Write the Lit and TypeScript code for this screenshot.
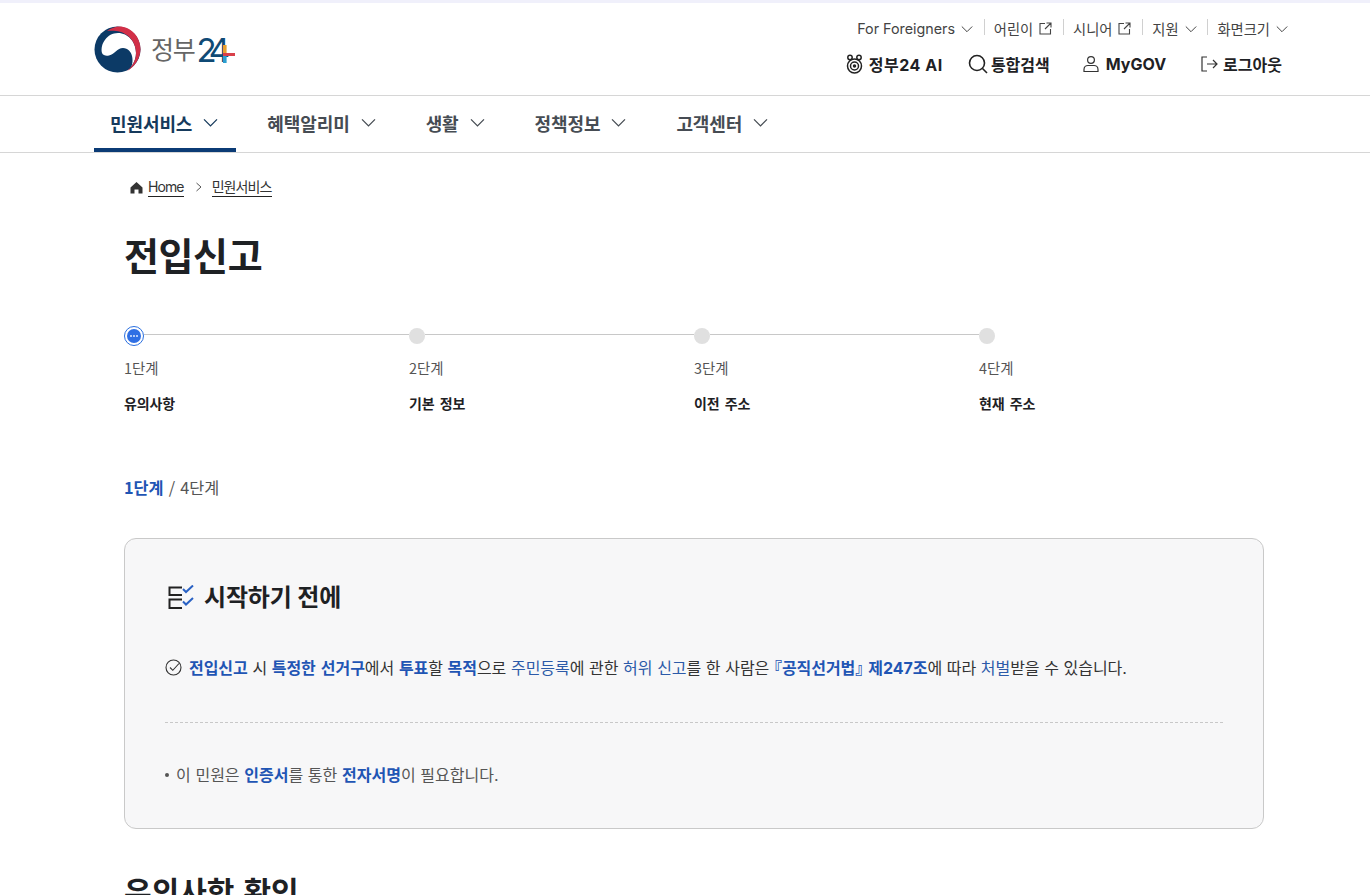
import { LitElement, html, css } from "lit";
import { customElement } from "lit/decorators.js";

const chev = (s = 12) => html`<svg class="chev" width=${s} height=${s} viewBox="0 0 12 12" fill="none" stroke="currentColor" stroke-width="1"><path d="M.8 3.500 6 8.700l5.200-5.200"/></svg>`;
const ext = html`<svg class="ext" width="13" height="13" viewBox="0 0 13 13" fill="none" stroke="#444" stroke-width="1.100"><path d="M6 1.500H1v10.500h10.500V7M7.500 1h4.500v4.500M12 1 6 7"/></svg>`;

@customElement("app-root")
export class AppRoot extends LitElement {
  static styles = css`
    :host { display: block; height: 895px; overflow: hidden; background: #fff; color: #1e2124;
      font-family: "Inter", "Noto Sans CJK KR", sans-serif; }
    * { box-sizing: border-box; }
    .strip { height: 3px; background: #f0f0fb; }
    .head { height: 93px; display: flex; justify-content: space-between; padding: 0 82px 0 94px; border-bottom: 1px solid #d6d6d6; }
    .logo { display: flex; align-items: center; gap: 10px; height: 92px; }
    .logo-text { display: flex; align-items: center; font-size: 25px; letter-spacing: -1.200px; color: #666; line-height: 1; font-weight: 400; margin-top: 2px; }
    .l24 { position: relative; color: #0f4a75; font-size: 33px; font-weight: 400; letter-spacing: -7.500px; margin-left: 2px; padding-right: 12px; }
    .plus { position: absolute; left: 26px; top: 11px; }
    .util { display: flex; flex-direction: column; align-items: flex-end; padding-top: 16.500px; }
    .u1 { display: flex; align-items: center; font-size: 14.300px; color: #444; height: 18px; }
    .u1 span.it { display: flex; align-items: center; gap: 6px; padding: 0 10.800px 0 10px; position: relative; }
    .u1 span.it + span.it::before { content: ""; position: absolute; left: 0; top: 1px; height: 16px; width: 1px; background: #d0d0d0; }
    .u1 span.it:last-child { padding-right: 0; }
    .u2 { display: flex; align-items: center; margin-top: 14.500px; font-size: 16px; font-weight: 700; color: #1e2124; height: 24px; padding-right: 6px; }
    .u2 span { display: flex; align-items: center; gap: 3px; }
    .ai { letter-spacing: 0.550px; margin-right: 25px; gap: 5px !important; }
    .sr { margin-right: 32px; }
    .mg { margin-right: 34px; gap: 6px !important; }
    .lo { gap: 5px !important; }
    .nav { height: 57px; border-bottom: 1px solid #d6d6d6; padding-left: 94px; display: flex; }
    .nav .n { display: flex; align-items: center; gap: 11px; height: 56px; padding: 0 16px 3px; margin-right: 16px; font-size: 18px; font-weight: 700; color: #464c53; letter-spacing: -0.100px; }
    .nav .n .chev { margin-right: 2px; }
    .nav .n.on { color: #163a5c; border-bottom: 4px solid #0b3b75; padding: 1px 16px 0; margin-right: 15px; }
    .main { padding: 0 106px 0 124px; }
    .crumb { display: flex; align-items: center; height: 20px; margin: 24px 0 0 6px; font-size: 14px; letter-spacing: -0.900px; color: #333; }
    .crumb svg { margin-right: 5px; }
    .crumb a { border-bottom: 1px solid #222; line-height: 18px; height: 19px; }
    .crumb .sep { margin: 0 9px 0 11px; display: flex; }
    .crumb .sep svg { margin: 0; }
    h1 { margin: 31px 0 0; font-size: 38px; line-height: 56px; font-weight: 700; color: #1e2124; letter-spacing: -0.400px; }
    .steps { display: grid; grid-template-columns: repeat(4, 285px); margin-top: 42px; }
    .step { position: relative; }
    .dotrow { height: 20px; display: flex; align-items: center; position: relative; }
    .step:not(:last-child) .dotrow::after { content: ""; position: absolute; left: 16px; right: 0; top: 8px; height: 1px; background: #c8c8c8; }
    .step:first-child .dotrow::after { left: 20px; }
    .dot { width: 16px; height: 16px; border-radius: 50%; background: #e0e0e0; }
    .cur { width: 20px; height: 20px; border-radius: 50%; border: 1px solid #2a6fe0; display: flex; align-items: center; justify-content: center; background: #fff; }
    .cur i { width: 14px; height: 14px; background: #2f6fe4; border-radius: 50%; display: flex; align-items: center; justify-content: center; gap: 1px; }
    .cur b { width: 2px; height: 2px; border-radius: 50%; background: #dfe9ff; }
    .st { margin-top: 12px; font-family: "Noto Sans CJK KR", sans-serif; font-size: 14.400px; line-height: 20px; color: #555; }
    .sn { margin-top: 16px; font-size: 14px; line-height: 20px; font-weight: 700; color: #1e2124; letter-spacing: -0.100px; word-spacing: 2px; }
    .count { margin-top: 61px; font-family: "Noto Sans CJK KR", sans-serif; font-size: 16.300px; line-height: 24px; color: #555; word-spacing: 1.500px; }
    .count b { color: #1f55b4; font-weight: 700; }
    .box { margin-top: 39px; height: 291px; border: 1px solid #c9c9c9; border-radius: 12px; background: #f7f7f8; padding: 41px 40px 0; }
    .bt { display: flex; align-items: center; gap: 10px; font-size: 24px; font-weight: 700; line-height: 36px; color: #1e2124; padding-left: 3px; letter-spacing: -0.150px; }
    .line { display: flex; align-items: center; gap: 7px; margin-top: 39px; font-size: 16px; line-height: 24px; color: #333; letter-spacing: -0.050px; word-spacing: 0.250px; white-space: nowrap; }
    .line b { color: #1f55b4; font-weight: 700; word-spacing: 1.300px; }
    .line em { color: #2c5aa8; font-style: normal; }
    .br { font-family: "Noto Sans CJK KR", sans-serif; font-feature-settings: "halt"; }
    .dash { margin-top: 42px; border-top: 1px dashed #c8c8c8; }
    .bul { margin-top: 40px; font-size: 16px; line-height: 24px; color: #555; display: flex; gap: 7px; letter-spacing: 0; word-spacing: 0.200px; }
    .bul i { width: 4px; height: 4px; margin: 10px 0 0 0; border-radius: 50%; background: #555; }
    .bul b { color: #1f55b4; font-weight: 700; }
    h2 { margin: 43px 0 0; font-size: 30px; line-height: 40px; font-weight: 700; color: #1e2124; word-spacing: 2px; }
  `;

  render() {
    return html`
      <div class="strip"></div>
      <header class="head">
        <div class="logo">
          <svg width="47" height="47" viewBox="0 0 47 47">
            <circle cx="23.500" cy="23.500" r="23" fill="#0c3a66"/>
            <path d="M8 27C6 18 13 7 24 7c10 0 18 9 18 20 0 5-1.500 9-5 14 2-3 1.700-8 1-11-1-4-4-8-9-8-6 0-8 6-14 7.500C12 30 9 29.500 8 27z" fill="#fff"/>
            <path d="M13 5c4-3 9-4.500 12-4.500C37 .5 46.500 11 46.500 23c0 9-5.500 17.500-13.500 22 6-5 9-12 9-18C42 15 33 6 22 5c-3-.4-6-.4-9 0z" fill="#d22f47"/>
          </svg>
          <div class="logo-text">정부<span class="l24">24<svg class="plus" width="14" height="18" viewBox="0 0 14 18"><rect x="0" y="0" width="3.600" height="8" fill="#e9a02e"/><rect x="0" y="8" width="12" height="3" fill="#d9404a"/><rect x="0" y="11" width="3.600" height="7" fill="#2b9fd0"/></svg></span></div>
        </div>
        <div class="util">
          <div class="u1">
            <span class="it">For Foreigners ${chev()}</span>
            <span class="it">어린이 ${ext}</span>
            <span class="it">시니어 ${ext}</span>
            <span class="it">지원 ${chev()}</span>
            <span class="it">화면크기 ${chev()}</span>
          </div>
          <div class="u2">
            <span class="ai">
              <svg width="19" height="20" viewBox="0 0 19 20" fill="none" stroke="#222" stroke-width="1.500"><circle cx="9.500" cy="12" r="7"/><circle cx="9.500" cy="12" r="4"/><circle cx="5" cy="3.500" r="2.200"/><circle cx="14" cy="3.500" r="2.200"/><circle cx="9.500" cy="12" r="1" fill="#222"/></svg>
              정부24 AI</span>
            <span class="sr">
              <svg width="20" height="20" viewBox="0 0 20 20" fill="none" stroke="#222" stroke-width="1.600"><circle cx="9" cy="9" r="7.500"/><path d="M14.500 14.500 19 19"/></svg>
              통합검색</span>
            <span class="mg">
              <svg width="18" height="18" viewBox="0 0 18 18" fill="none" stroke="#333" stroke-width="1.200"><circle cx="9" cy="5" r="3.400"/><path d="M2 16.500v-2c0-2.500 2-4 4-4h6c2 0 4 1.500 4 4v2z"/></svg>
              MyGOV</span>
            <span class="lo">
              <svg width="18" height="18" viewBox="0 0 18 18" fill="none" stroke="#333" stroke-width="1.200"><path d="M7 2H2v14h5M7 9h10M13 5l4 4-4 4"/></svg>
              로그아웃</span>
          </div>
        </div>
      </header>
      <nav class="nav">
        <div class="n on">민원서비스 ${chev(15)}</div>
        <div class="n">혜택알리미 ${chev(15)}</div>
        <div class="n">생활 ${chev(15)}</div>
        <div class="n">정책정보 ${chev(15)}</div>
        <div class="n">고객센터 ${chev(15)}</div>
      </nav>
      <main class="main">
        <div class="crumb">
          <svg width="13" height="13" viewBox="0 0 13 13"><path d="M6.500 1 12.500 6.500V12.500H8.500V8.500H4.500V12.500H.5V6.500z" fill="#333"/></svg>
          <a>Home</a>
          <span class="sep"><svg width="8" height="10" viewBox="0 0 8 10" fill="none" stroke="#555"><path d="M1.500 1 6 5l-4.500 4"/></svg></span>
          <a>민원서비스</a>
        </div>
        <h1>전입신고</h1>
        <div class="steps">
          <div class="step"><div class="dotrow"><div class="cur"><i><b></b><b></b><b></b></i></div></div><div class="st">1단계</div><div class="sn">유의사항</div></div>
          <div class="step"><div class="dotrow"><div class="dot"></div></div><div class="st">2단계</div><div class="sn">기본 정보</div></div>
          <div class="step"><div class="dotrow"><div class="dot"></div></div><div class="st">3단계</div><div class="sn">이전 주소</div></div>
          <div class="step"><div class="dotrow"><div class="dot"></div></div><div class="st">4단계</div><div class="sn">현재 주소</div></div>
        </div>
        <div class="count"><b>1단계</b> / 4단계</div>
        <section class="box">
          <div class="bt">
            <svg width="26" height="26" viewBox="0 0 26 26" fill="none" stroke-width="2"><path d="M14 2.500H1.500V10H14M14 14.500H1.500V23H14" stroke="#222"/><path d="M15 4 18 7 25 .5M15 16.500 18 19.500 25 13" stroke="#2a62c4"/></svg>
            시작하기 전에
          </div>
          <div class="line">
            <svg width="17" height="17" viewBox="0 0 17 17" fill="none" stroke="#333" stroke-width="1.100"><circle cx="8.500" cy="8.500" r="7.500"/><path d="M5 8.500 7.800 11.300 14 4.500"/></svg>
            <span><b>전입신고</b> 시 <b>특정한 선거구</b>에서 <b>투표</b>할 <b>목적</b>으로 <em>주민등록</em>에 관한 <em>허위 신고</em>를 한 사람은 <b><span class="br">『</span>공직선거법<span class="br">』</span> 제247조</b>에 따라 <em>처벌</em>받을 수 있습니다.</span>
          </div>
          <div class="dash"></div>
          <div class="bul"><i></i><span>이 민원은 <b>인증서</b>를 통한 <b>전자서명</b>이 필요합니다.</span></div>
        </section>
        <h2>유의사항 확인</h2>
      </main>
    `;
  }
}
